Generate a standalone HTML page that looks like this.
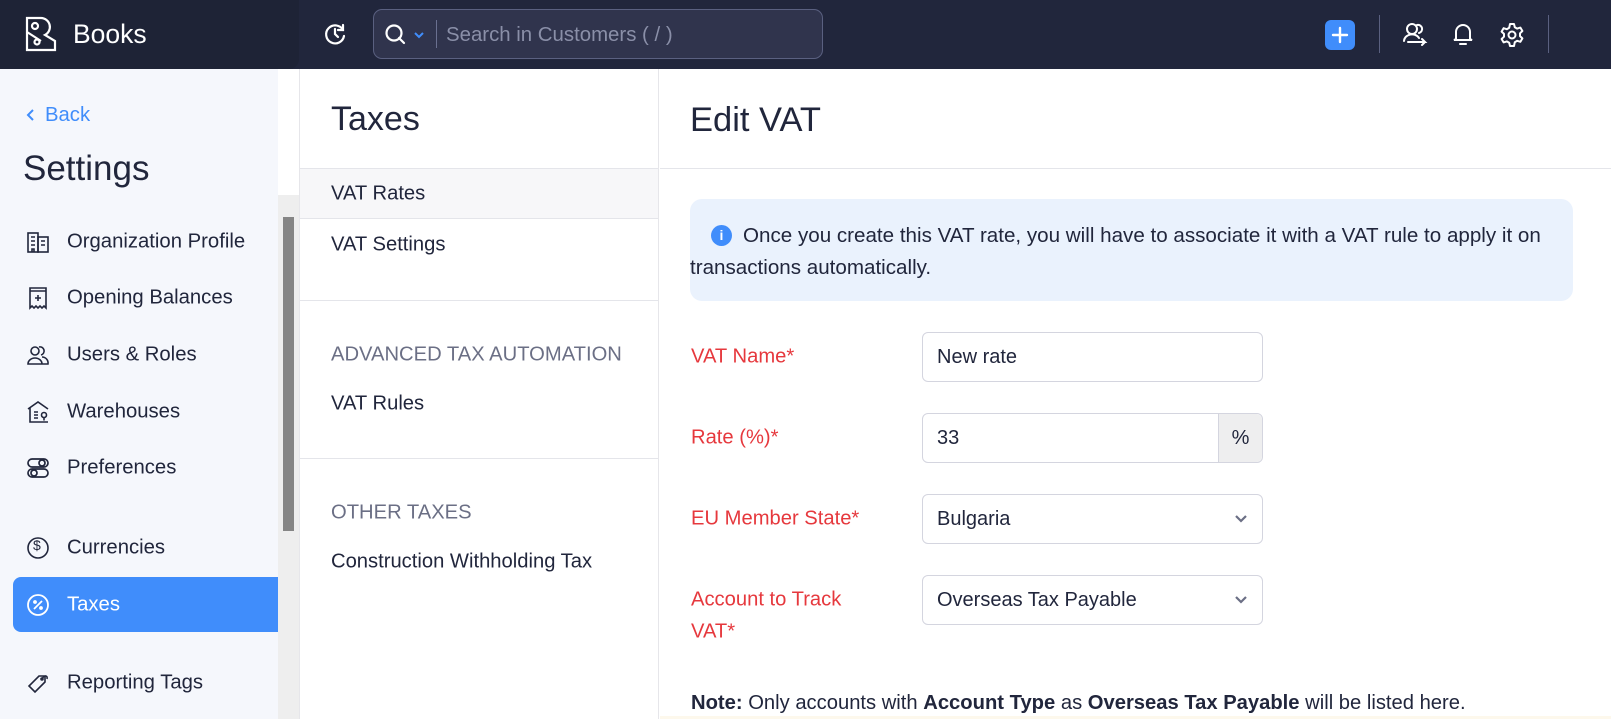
<!DOCTYPE html>
<html><head><meta charset="utf-8">
<style>
*{margin:0;padding:0;box-sizing:border-box}
body{width:1611px;height:719px;overflow:hidden;background:#fff;font-family:"Liberation Sans",sans-serif;color:#21263c;position:relative}
.abs{position:absolute}
.top{left:0;top:0;width:1611px;height:69px;background:#21263c}
.logo{left:0;top:0;width:299px;height:69px;background:#1e2336;border-bottom-right-radius:10px}
.search{left:373px;top:9px;width:450px;height:50px;border:1px solid #5a6080;border-radius:9px;background:#30344d}
.side{left:0;top:69px;width:278px;height:650px;background:#f5f7fc}
.track{left:278px;top:195px;width:21px;height:524px;background:#eeeeee}
.thumb{left:283px;top:217px;width:11px;height:314px;background:#858585}
.item{position:absolute;left:67px;font-size:20.3px;color:#21263c;transform:translateY(-50%)}
.ic{position:absolute;left:26px;width:24px;height:24px;transform:translateY(-50%)}
.mid{left:299px;top:69px;width:360px;height:650px;border-left:1px solid #e6e6ea;border-right:1px solid #e6e6ea}
.hl{position:absolute;left:0;width:358px;height:1px;background:#e4e5ea}
.mt{position:absolute;left:31px;font-size:20.2px;transform:translateY(-50%)}
.lbl{position:absolute;left:691px;color:#e6383d;font-size:20.2px;transform:translateY(-50%)}
.inp{position:absolute;left:922px;width:341px;height:50px;border:1px solid #d4d5df;border-radius:6px;background:#fff;font-size:20px;padding-left:14px;line-height:48px}
.chev{position:absolute;right:14px;top:19px}
</style></head><body>
<div class="abs top"></div>
<div class="abs logo"></div>
<svg class="abs" style="left:24px;top:16px" width="36" height="36" viewBox="0 0 36 36" fill="none" stroke="#fff" stroke-width="2.2"><path d="M3 2h14a9 9 0 0 1 4 17l10 6v9H3z M3 16l14 9"/><circle cx="11" cy="10" r="3"/><circle cx="13" cy="26" r="2.5"/></svg>
<div class="abs" style="left:73px;top:19px;font-size:26.5px;color:#fff">Books</div>
<svg class="abs" style="left:323px;top:22px" width="24" height="24" viewBox="0 0 24 24" fill="none" stroke="#fff" stroke-width="2.2" stroke-linecap="round"><path d="M20 8a9 9 0 1 0 1 6"/><path d="M20 3v5h-5"/><path d="M12 7v5l3 3"/></svg>
<div class="abs search"></div>
<svg class="abs" style="left:384px;top:23px" width="22" height="22" viewBox="0 0 22 22" fill="none" stroke="#fff" stroke-width="2.2"><circle cx="10" cy="10" r="7.5"/><path d="M15 15l5 5" stroke-linecap="round"/></svg>
<svg class="abs" style="left:414px;top:32px" width="10" height="7" viewBox="0 0 10 7" fill="none" stroke="#408dfb" stroke-width="2"><path d="M1 1l4 4 4-4"/></svg>
<div class="abs" style="left:436px;top:20px;width:1px;height:28px;background:#6a7090"></div>
<div class="abs" style="left:446px;top:24px;font-size:20.4px;color:#8a8fa8">Search in Customers ( / )</div>
<div class="abs" style="left:1325px;top:20px;width:30px;height:30px;border-radius:6px;background:#408dfb"></div>
<svg class="abs" style="left:1325px;top:20px" width="30" height="30" viewBox="0 0 30 30" stroke="#fff" stroke-width="2.4" stroke-linecap="round"><path d="M15 8v14M8 15h14"/></svg>
<div class="abs" style="left:1379px;top:15px;width:1px;height:38px;background:#5a6080"></div>
<svg class="abs" style="left:1403px;top:22px" width="26" height="24" viewBox="0 0 26 24" fill="none" stroke="#fff" stroke-width="2" stroke-linecap="round"><circle cx="9" cy="7" r="5"/><path d="M14 3a4 4 0 1 1 2 8"/><path d="M1 19a8 7 0 0 1 15-3M5 20h17l-3-3M22 20l-3 3"/></svg>
<svg class="abs" style="left:1452px;top:22px" width="22" height="24" viewBox="0 0 22 24" fill="none" stroke="#fff" stroke-width="2" stroke-linecap="round"><path d="M4 17V10a7 7 0 0 1 14 0v7l2 1H2z"/><path d="M8 22h6"/></svg>
<svg class="abs" style="left:1499px;top:22px" width="26" height="26" viewBox="0 0 26 26" fill="none" stroke="#fff" stroke-width="2" stroke-linejoin="round"><circle cx="13" cy="13" r="3.5"/><path d="M11 2h4l.8 3.2 2.4 1.4 3.2-1 2 3.4-2.4 2.3v2.8l2.4 2.3-2 3.4-3.2-1-2.4 1.4L15 24h-4l-.8-3.2-2.4-1.4-3.2 1-2-3.4 2.4-2.3v-2.8L2.6 9.6l2-3.4 3.2 1 2.4-1.4z"/></svg>
<div class="abs" style="left:1548px;top:15px;width:1px;height:38px;background:#5a6080"></div>

<div class="abs side"></div>
<div class="abs track"></div>
<div class="abs thumb"></div>
<svg class="abs" style="left:26px;top:108px" width="10" height="14" viewBox="0 0 10 14" fill="none" stroke="#408dfb" stroke-width="2"><path d="M7 2L2 7l5 5"/></svg>
<div class="abs" style="left:45px;top:104px;font-size:20.3px;color:#408dfb">Back</div>
<div class="abs" style="left:23px;top:149px;font-size:35px;color:#21263c">Settings</div>
<svg class="ic" style="top:242px" viewBox="0 0 24 24" fill="none" stroke="#21263c" stroke-width="1.6"><rect x="2" y="3" width="10" height="19"/><rect x="12" y="7" width="10" height="15"/><path d="M5 7h4M5 11h4M5 15h4M15 11h4M15 15h4M6 22v-3h2v3"/></svg>
<div class="item" style="top:242px">Organization Profile</div>
<svg class="ic" style="top:298px" viewBox="0 0 24 24" fill="none" stroke="#21263c" stroke-width="1.6"><path d="M4 2h16v20l-2-2-2 2-2-2-2 2-2-2-2 2-2-2-2 2z M4 5h16"/><path d="M12 9v6M9 12h6"/></svg>
<div class="item" style="top:298px">Opening Balances</div>
<svg class="ic" style="top:355px" viewBox="0 0 24 24" fill="none" stroke="#21263c" stroke-width="1.6"><circle cx="9" cy="8" r="4"/><path d="M13 4a4 4 0 1 1 2 8"/><path d="M2 21a7 6 0 0 1 14 0zM16 14a6 6 0 0 1 6 7h-6"/></svg>
<div class="item" style="top:355px">Users &amp; Roles</div>
<svg class="ic" style="top:412px" viewBox="0 0 24 24" fill="none" stroke="#21263c" stroke-width="1.6"><path d="M2 9l10-7 10 7M4 8v14h18M8 12h4M8 15h4M8 18h4"/><circle cx="18" cy="15" r="2.5"/><path d="M18 17.5v3"/></svg>
<div class="item" style="top:412px">Warehouses</div>
<svg class="ic" style="top:468px" viewBox="0 0 24 24" fill="none" stroke="#21263c" stroke-width="1.7"><rect x="2" y="3" width="20" height="8" rx="4"/><rect x="2" y="13" width="20" height="8" rx="4"/><circle cx="16" cy="7" r="3"/><circle cx="8" cy="17" r="3"/></svg>
<div class="item" style="top:468px">Preferences</div>
<svg class="ic" style="top:548px" viewBox="0 0 24 24" fill="none" stroke="#21263c" stroke-width="1.6"><circle cx="12" cy="12" r="10"/></svg>
<div class="abs" style="left:33px;top:537px;font-size:14px">$</div>
<div class="item" style="top:548px">Currencies</div>
<div class="abs" style="left:13px;top:577px;width:265px;height:55px;background:#408dfb;border-radius:8px 0 0 8px"></div>
<svg class="ic" style="top:605px" viewBox="0 0 24 24" fill="none" stroke="#fff" stroke-width="1.8"><circle cx="12" cy="12" r="10"/><path d="M8 16l8-8"/><circle cx="9" cy="9" r="1"/><circle cx="15" cy="15" r="1"/></svg>
<div class="item" style="top:605px;color:#fff">Taxes</div>
<svg class="ic" style="top:683px" viewBox="0 0 24 24" fill="none" stroke="#21263c" stroke-width="1.6"><path d="M13 5l6 0 0 6-10 10-6-6z"/><circle cx="16" cy="8" r="1"/><path d="M16 8c2-4 6-4 5 0"/></svg>
<div class="item" style="top:683px">Reporting Tags</div>

<div class="abs mid">
<div class="abs" style="left:31px;top:31px;font-size:34px">Taxes</div>
<div class="hl" style="top:99px"></div>
<div class="abs" style="left:0;top:100px;width:358px;height:49px;background:#f7f7f9"></div>
<div class="hl" style="top:149px"></div>
<div class="mt" style="top:125px">VAT Rates</div>
<div class="mt" style="top:176px">VAT Settings</div>
<div class="hl" style="top:231px"></div>
<div class="mt" style="top:286px;color:#6b6f85">ADVANCED TAX AUTOMATION</div>
<div class="mt" style="top:335px">VAT Rules</div>
<div class="hl" style="top:389px"></div>
<div class="mt" style="top:444px;color:#6b6f85">OTHER TAXES</div>
<div class="mt" style="top:493px">Construction Withholding Tax</div>
</div>

<div class="abs" style="left:690px;top:101px;font-size:34.5px">Edit VAT</div>
<div class="abs" style="left:660px;top:168px;width:951px;height:1px;background:#e4e5ea"></div>
<div class="abs" style="left:690px;top:199px;width:883px;height:102px;background:#eaf2fd;border-radius:12px"></div>
<div class="abs" style="left:711px;top:225px;width:21px;height:21px;border-radius:50%;background:#408dfb;color:#fff;font-size:14px;font-weight:bold;text-align:center;line-height:21px">i</div>
<div class="abs" style="left:743px;top:221px;font-size:20.6px;width:840px;line-height:30px;white-space:nowrap">Once you create this VAT rate, you will have to associate it with a VAT rule to apply it on</div>
<div class="abs" style="left:690px;top:253px;font-size:20.6px;line-height:30px">transactions automatically.</div>

<div class="lbl" style="top:357px">VAT Name*</div>
<div class="inp" style="top:332px">New rate</div>
<div class="lbl" style="top:438px">Rate (%)*</div>
<div class="inp" style="top:413px">33<div style="position:absolute;right:0;top:0;width:44px;height:48px;background:#eeeeef;border-left:1px solid #d4d5df;border-radius:0 6px 6px 0;text-align:center">%</div></div>
<div class="lbl" style="top:519px">EU Member State*</div>
<div class="inp" style="top:494px">Bulgaria<svg class="chev" width="14" height="10" viewBox="0 0 14 10" fill="none" stroke="#6b6f85" stroke-width="2.2"><path d="M2 2l5 5 5-5"/></svg></div>
<div class="lbl" style="top:600px">Account to Track</div>
<div class="lbl" style="top:632px">VAT*</div>
<div class="inp" style="top:575px">Overseas Tax Payable<svg class="chev" width="14" height="10" viewBox="0 0 14 10" fill="none" stroke="#6b6f85" stroke-width="2.2"><path d="M2 2l5 5 5-5"/></svg></div>
<div class="abs" style="left:691px;top:692px;font-size:20.2px;white-space:nowrap"><b>Note:</b> Only accounts with <b>Account Type</b> as <b>Overseas Tax Payable</b> will be listed here.</div>
<div class="abs" style="left:660px;top:716px;width:951px;height:3px;background:#fdf8ec"></div>
</body></html>
